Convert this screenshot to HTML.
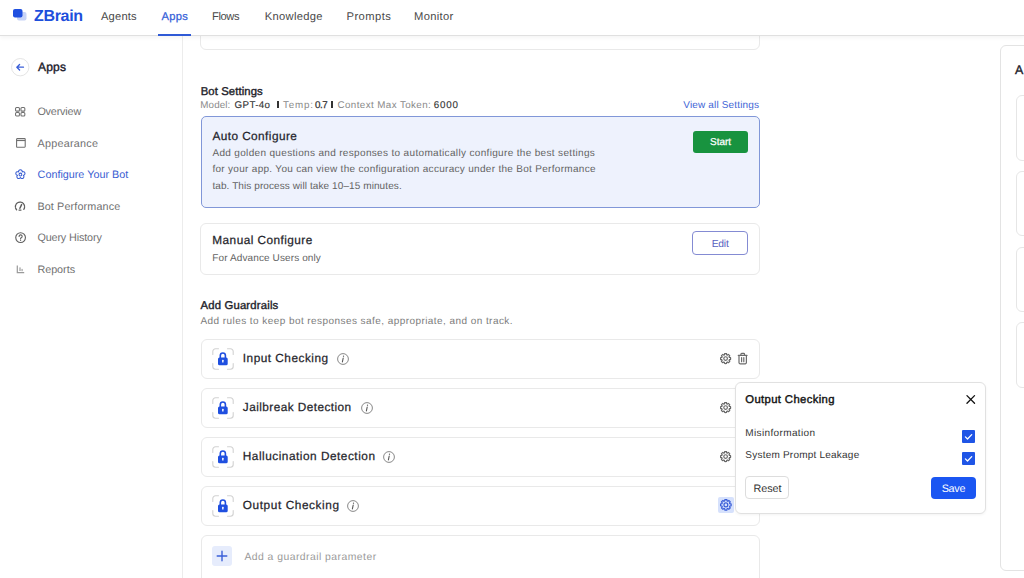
<!DOCTYPE html>
<html><head><meta charset="utf-8"><title>ZBrain</title>
<style>
html,body{margin:0;padding:0;background:#ffffff;}
body{width:1024px;height:578px;overflow:hidden;position:relative;font-family:"Liberation Sans",sans-serif;text-rendering:geometricPrecision;}
.t{position:absolute;white-space:nowrap;}
.a{position:absolute;display:block;overflow:visible;}
.box{position:absolute;box-sizing:border-box;}
.card{border:1px solid #e9e9e9;border-radius:6px;background:#fff;}
</style></head><body>
<!-- right panel -->
<div class="box" style="left:1000.4px;top:44.7px;width:60px;height:526.7px;border:1px solid #e3e3e3;border-radius:6px"></div>
<div class="box" style="left:1015.5px;top:95.4px;width:40px;height:65.3px;border:1px solid #e6e6e6;border-radius:6px"></div>
<div class="box" style="left:1015.5px;top:171.1px;width:40px;height:65.4px;border:1px solid #e6e6e6;border-radius:6px"></div>
<div class="box" style="left:1015.5px;top:247px;width:40px;height:65px;border:1px solid #e6e6e6;border-radius:6px"></div>
<div class="box" style="left:1015.5px;top:321.7px;width:40px;height:66.5px;border:1px solid #e6e6e6;border-radius:6px"></div>

<!-- pipes -->
<div class="box" style="left:277.4px;top:101.2px;width:1.7px;height:7.2px;background:#333"></div>
<div class="box" style="left:331.2px;top:101.2px;width:1.7px;height:7.2px;background:#333"></div>
<!-- sidebar border -->
<div class="box" style="left:182px;top:35px;width:1px;height:543px;background:#ececec"></div>

<!-- top card -->
<div class="box card" style="left:200.3px;top:10px;width:559.7px;height:39.6px"></div>

<!-- auto configure -->
<div class="box" style="left:200.5px;top:115.5px;width:559.8px;height:92.6px;border:1px solid #8197d8;border-radius:5px;background:#eef2fd"></div>
<div class="box" style="left:693px;top:131px;width:54.5px;height:22px;background:#18933f;border-radius:3px"></div>

<!-- manual configure -->
<div class="box card" style="left:200.2px;top:222.6px;width:559.6px;height:52.4px"></div>
<div class="box" style="left:692.3px;top:230.9px;width:56.2px;height:24px;border:1px solid #848bd3;border-radius:4px"></div>

<div class="box card" style="left:200.5px;top:338.5px;width:559.5px;height:40px"></div>
<svg class="a" style="left:212.3px;top:347.5px" width="22" height="22" viewBox="0 0 22 22" fill="none"><g stroke="#d2d2d2" stroke-width="1.1" stroke-linecap="round"><path d="M0.8 6.5V3.5a2.7 2.7 0 0 1 2.7-2.7H6.5"/><path d="M15.5 0.8H18.5a2.7 2.7 0 0 1 2.7 2.7V6.5"/><path d="M21.2 15.5V18.5a2.7 2.7 0 0 1-2.7 2.7H15.5"/><path d="M6.5 21.2H3.5a2.7 2.7 0 0 1-2.7-2.7V15.5"/></g><path d="M8.3 10V7.6a2.55 2.55 0 0 1 5.1 0V10" stroke="#1f4fe0" stroke-width="1.6" fill="none"/><rect x="6" y="9.4" width="9.7" height="7.8" rx="1.5" fill="#1f4fe0"/><rect x="10.15" y="11.7" width="1.4" height="2.9" rx="0.5" fill="#ffffff"/></svg>
<div class="box card" style="left:200.5px;top:387.5px;width:559.5px;height:40px"></div>
<svg class="a" style="left:212.3px;top:396.5px" width="22" height="22" viewBox="0 0 22 22" fill="none"><g stroke="#d2d2d2" stroke-width="1.1" stroke-linecap="round"><path d="M0.8 6.5V3.5a2.7 2.7 0 0 1 2.7-2.7H6.5"/><path d="M15.5 0.8H18.5a2.7 2.7 0 0 1 2.7 2.7V6.5"/><path d="M21.2 15.5V18.5a2.7 2.7 0 0 1-2.7 2.7H15.5"/><path d="M6.5 21.2H3.5a2.7 2.7 0 0 1-2.7-2.7V15.5"/></g><path d="M8.3 10V7.6a2.55 2.55 0 0 1 5.1 0V10" stroke="#1f4fe0" stroke-width="1.6" fill="none"/><rect x="6" y="9.4" width="9.7" height="7.8" rx="1.5" fill="#1f4fe0"/><rect x="10.15" y="11.7" width="1.4" height="2.9" rx="0.5" fill="#ffffff"/></svg>
<div class="box card" style="left:200.5px;top:436.5px;width:559.5px;height:40px"></div>
<svg class="a" style="left:212.3px;top:445.5px" width="22" height="22" viewBox="0 0 22 22" fill="none"><g stroke="#d2d2d2" stroke-width="1.1" stroke-linecap="round"><path d="M0.8 6.5V3.5a2.7 2.7 0 0 1 2.7-2.7H6.5"/><path d="M15.5 0.8H18.5a2.7 2.7 0 0 1 2.7 2.7V6.5"/><path d="M21.2 15.5V18.5a2.7 2.7 0 0 1-2.7 2.7H15.5"/><path d="M6.5 21.2H3.5a2.7 2.7 0 0 1-2.7-2.7V15.5"/></g><path d="M8.3 10V7.6a2.55 2.55 0 0 1 5.1 0V10" stroke="#1f4fe0" stroke-width="1.6" fill="none"/><rect x="6" y="9.4" width="9.7" height="7.8" rx="1.5" fill="#1f4fe0"/><rect x="10.15" y="11.7" width="1.4" height="2.9" rx="0.5" fill="#ffffff"/></svg>
<div class="box card" style="left:200.5px;top:485.5px;width:559.5px;height:40px"></div>
<svg class="a" style="left:212.3px;top:494.5px" width="22" height="22" viewBox="0 0 22 22" fill="none"><g stroke="#d2d2d2" stroke-width="1.1" stroke-linecap="round"><path d="M0.8 6.5V3.5a2.7 2.7 0 0 1 2.7-2.7H6.5"/><path d="M15.5 0.8H18.5a2.7 2.7 0 0 1 2.7 2.7V6.5"/><path d="M21.2 15.5V18.5a2.7 2.7 0 0 1-2.7 2.7H15.5"/><path d="M6.5 21.2H3.5a2.7 2.7 0 0 1-2.7-2.7V15.5"/></g><path d="M8.3 10V7.6a2.55 2.55 0 0 1 5.1 0V10" stroke="#1f4fe0" stroke-width="1.6" fill="none"/><rect x="6" y="9.4" width="9.7" height="7.8" rx="1.5" fill="#1f4fe0"/><rect x="10.15" y="11.7" width="1.4" height="2.9" rx="0.5" fill="#ffffff"/></svg>
<svg class="a" style="left:337.3px;top:352.8px" width="12" height="12" viewBox="0 0 12 12" fill="none"><circle cx="6" cy="6" r="5.4" stroke="#7a7a7a" stroke-width="0.9"/><path d="M6.5 3.1l0 0.1" stroke="#555" stroke-width="1.2" stroke-linecap="round"/><path d="M6.2 5.0L5.4 8.9" stroke="#555" stroke-width="1.1" stroke-linecap="round"/></svg>
<svg class="a" style="left:360.6px;top:401.8px" width="12" height="12" viewBox="0 0 12 12" fill="none"><circle cx="6" cy="6" r="5.4" stroke="#7a7a7a" stroke-width="0.9"/><path d="M6.5 3.1l0 0.1" stroke="#555" stroke-width="1.2" stroke-linecap="round"/><path d="M6.2 5.0L5.4 8.9" stroke="#555" stroke-width="1.1" stroke-linecap="round"/></svg>
<svg class="a" style="left:382.9px;top:450.8px" width="12" height="12" viewBox="0 0 12 12" fill="none"><circle cx="6" cy="6" r="5.4" stroke="#7a7a7a" stroke-width="0.9"/><path d="M6.5 3.1l0 0.1" stroke="#555" stroke-width="1.2" stroke-linecap="round"/><path d="M6.2 5.0L5.4 8.9" stroke="#555" stroke-width="1.1" stroke-linecap="round"/></svg>
<svg class="a" style="left:347px;top:499.8px" width="12" height="12" viewBox="0 0 12 12" fill="none"><circle cx="6" cy="6" r="5.4" stroke="#7a7a7a" stroke-width="0.9"/><path d="M6.5 3.1l0 0.1" stroke="#555" stroke-width="1.2" stroke-linecap="round"/><path d="M6.2 5.0L5.4 8.9" stroke="#555" stroke-width="1.1" stroke-linecap="round"/></svg>
<svg class="a" style="left:720.40px;top:352.80px" width="11.20" height="11.20" viewBox="0 0 24 24" fill="none" stroke="#666666" stroke-width="2.5" stroke-linejoin="round" stroke-linecap="round"><path d="M19.76 8.79A8.4 8.4 0 0 1 20.07 9.68L22.60 9.94A10.8 10.8 0 0 1 22.60 14.06L20.07 14.32A8.4 8.4 0 0 1 19.76 15.21A8.4 8.4 0 0 1 19.35 16.07L20.95 18.04A10.8 10.8 0 0 1 18.04 20.95L16.07 19.35A8.4 8.4 0 0 1 15.21 19.76A8.4 8.4 0 0 1 14.32 20.07L14.06 22.60A10.8 10.8 0 0 1 9.94 22.60L9.68 20.07A8.4 8.4 0 0 1 8.79 19.76A8.4 8.4 0 0 1 7.93 19.35L5.96 20.95A10.8 10.8 0 0 1 3.05 18.04L4.65 16.07A8.4 8.4 0 0 1 4.24 15.21A8.4 8.4 0 0 1 3.93 14.32L1.40 14.06A10.8 10.8 0 0 1 1.40 9.94L3.93 9.68A8.4 8.4 0 0 1 4.24 8.79A8.4 8.4 0 0 1 4.65 7.93L3.05 5.96A10.8 10.8 0 0 1 5.96 3.05L7.93 4.65A8.4 8.4 0 0 1 8.79 4.24A8.4 8.4 0 0 1 9.68 3.93L9.94 1.40A10.8 10.8 0 0 1 14.06 1.40L14.32 3.93A8.4 8.4 0 0 1 15.21 4.24A8.4 8.4 0 0 1 16.07 4.65L18.04 3.05A10.8 10.8 0 0 1 20.95 5.96L19.35 7.93A8.4 8.4 0 0 1 19.76 8.79Z"/><circle cx="12" cy="12" r="3.9"/></svg>
<svg class="a" style="left:720.40px;top:401.80px" width="11.20" height="11.20" viewBox="0 0 24 24" fill="none" stroke="#666666" stroke-width="2.5" stroke-linejoin="round" stroke-linecap="round"><path d="M19.76 8.79A8.4 8.4 0 0 1 20.07 9.68L22.60 9.94A10.8 10.8 0 0 1 22.60 14.06L20.07 14.32A8.4 8.4 0 0 1 19.76 15.21A8.4 8.4 0 0 1 19.35 16.07L20.95 18.04A10.8 10.8 0 0 1 18.04 20.95L16.07 19.35A8.4 8.4 0 0 1 15.21 19.76A8.4 8.4 0 0 1 14.32 20.07L14.06 22.60A10.8 10.8 0 0 1 9.94 22.60L9.68 20.07A8.4 8.4 0 0 1 8.79 19.76A8.4 8.4 0 0 1 7.93 19.35L5.96 20.95A10.8 10.8 0 0 1 3.05 18.04L4.65 16.07A8.4 8.4 0 0 1 4.24 15.21A8.4 8.4 0 0 1 3.93 14.32L1.40 14.06A10.8 10.8 0 0 1 1.40 9.94L3.93 9.68A8.4 8.4 0 0 1 4.24 8.79A8.4 8.4 0 0 1 4.65 7.93L3.05 5.96A10.8 10.8 0 0 1 5.96 3.05L7.93 4.65A8.4 8.4 0 0 1 8.79 4.24A8.4 8.4 0 0 1 9.68 3.93L9.94 1.40A10.8 10.8 0 0 1 14.06 1.40L14.32 3.93A8.4 8.4 0 0 1 15.21 4.24A8.4 8.4 0 0 1 16.07 4.65L18.04 3.05A10.8 10.8 0 0 1 20.95 5.96L19.35 7.93A8.4 8.4 0 0 1 19.76 8.79Z"/><circle cx="12" cy="12" r="3.9"/></svg>
<svg class="a" style="left:720.40px;top:450.80px" width="11.20" height="11.20" viewBox="0 0 24 24" fill="none" stroke="#666666" stroke-width="2.5" stroke-linejoin="round" stroke-linecap="round"><path d="M19.76 8.79A8.4 8.4 0 0 1 20.07 9.68L22.60 9.94A10.8 10.8 0 0 1 22.60 14.06L20.07 14.32A8.4 8.4 0 0 1 19.76 15.21A8.4 8.4 0 0 1 19.35 16.07L20.95 18.04A10.8 10.8 0 0 1 18.04 20.95L16.07 19.35A8.4 8.4 0 0 1 15.21 19.76A8.4 8.4 0 0 1 14.32 20.07L14.06 22.60A10.8 10.8 0 0 1 9.94 22.60L9.68 20.07A8.4 8.4 0 0 1 8.79 19.76A8.4 8.4 0 0 1 7.93 19.35L5.96 20.95A10.8 10.8 0 0 1 3.05 18.04L4.65 16.07A8.4 8.4 0 0 1 4.24 15.21A8.4 8.4 0 0 1 3.93 14.32L1.40 14.06A10.8 10.8 0 0 1 1.40 9.94L3.93 9.68A8.4 8.4 0 0 1 4.24 8.79A8.4 8.4 0 0 1 4.65 7.93L3.05 5.96A10.8 10.8 0 0 1 5.96 3.05L7.93 4.65A8.4 8.4 0 0 1 8.79 4.24A8.4 8.4 0 0 1 9.68 3.93L9.94 1.40A10.8 10.8 0 0 1 14.06 1.40L14.32 3.93A8.4 8.4 0 0 1 15.21 4.24A8.4 8.4 0 0 1 16.07 4.65L18.04 3.05A10.8 10.8 0 0 1 20.95 5.96L19.35 7.93A8.4 8.4 0 0 1 19.76 8.79Z"/><circle cx="12" cy="12" r="3.9"/></svg>
<div class="box" style="left:717.8px;top:497px;width:16.2px;height:16px;background:#d6e1fc;border-radius:2px"></div>
<svg class="a" style="left:720.02px;top:499.22px" width="11.76" height="11.76" viewBox="0 0 24 24" fill="none" stroke="#3b5fd8" stroke-width="2.5" stroke-linejoin="round" stroke-linecap="round"><path d="M19.76 8.79A8.4 8.4 0 0 1 20.07 9.68L22.60 9.94A10.8 10.8 0 0 1 22.60 14.06L20.07 14.32A8.4 8.4 0 0 1 19.76 15.21A8.4 8.4 0 0 1 19.35 16.07L20.95 18.04A10.8 10.8 0 0 1 18.04 20.95L16.07 19.35A8.4 8.4 0 0 1 15.21 19.76A8.4 8.4 0 0 1 14.32 20.07L14.06 22.60A10.8 10.8 0 0 1 9.94 22.60L9.68 20.07A8.4 8.4 0 0 1 8.79 19.76A8.4 8.4 0 0 1 7.93 19.35L5.96 20.95A10.8 10.8 0 0 1 3.05 18.04L4.65 16.07A8.4 8.4 0 0 1 4.24 15.21A8.4 8.4 0 0 1 3.93 14.32L1.40 14.06A10.8 10.8 0 0 1 1.40 9.94L3.93 9.68A8.4 8.4 0 0 1 4.24 8.79A8.4 8.4 0 0 1 4.65 7.93L3.05 5.96A10.8 10.8 0 0 1 5.96 3.05L7.93 4.65A8.4 8.4 0 0 1 8.79 4.24A8.4 8.4 0 0 1 9.68 3.93L9.94 1.40A10.8 10.8 0 0 1 14.06 1.40L14.32 3.93A8.4 8.4 0 0 1 15.21 4.24A8.4 8.4 0 0 1 16.07 4.65L18.04 3.05A10.8 10.8 0 0 1 20.95 5.96L19.35 7.93A8.4 8.4 0 0 1 19.76 8.79Z"/><circle cx="12" cy="12" r="3.9"/></svg>
<svg class="a" style="left:736px;top:351px" width="12" height="14" viewBox="0 0 12 14" fill="none" stroke="#6c6c6c" stroke-width="1.2" stroke-linecap="round" stroke-linejoin="round"><path d="M2.3 4.4H11"/><path d="M4.9 4.2V3.2a0.8 0.8 0 0 1 0.8-0.8H7.7a0.8 0.8 0 0 1 0.8 0.8V4.2"/><path d="M3 4.6V11.6a1.2 1.2 0 0 0 1.2 1.2H9.2a1.2 1.2 0 0 0 1.2-1.2V4.6"/><path d="M5.6 6.6V10.7M7.8 6.6V10.7"/></svg>

<!-- add param -->
<div class="box card" style="left:200.5px;top:534.6px;width:559.5px;height:60px"></div>
<div class="box" style="left:212.2px;top:546.4px;width:20.3px;height:20px;background:#e6ecfc;border-radius:3px"></div>
<svg class="a" style="left:216.3px;top:550.4px" width="12" height="12" viewBox="0 0 12 12"><path d="M6 1.2v9.6M1.2 6h9.6" stroke="#3a5fd8" stroke-width="1.4" stroke-linecap="round"/></svg>

<!-- popover -->
<div class="box" style="left:734.6px;top:382.3px;width:251.6px;height:131.5px;border:1px solid #e1e1e1;border-radius:6px;background:#fff;box-shadow:0 1px 3px rgba(0,0,0,0.05)"></div>
<svg class="a" style="left:966.3px;top:394.9px" width="9.5" height="8.8" viewBox="0 0 10 10"><path d="M0.7 0.7L9.3 9.3M9.3 0.7L0.7 9.3" stroke="#111" stroke-width="1.5" stroke-linecap="round"/></svg>
<svg class="a" style="left:962.3px;top:429.5px" width="13" height="13" viewBox="0 0 13 13"><rect width="13" height="13" rx="1" fill="#1f55e6"/><path d="M3.4 6.9l2.1 2.1 4.2-4.4" stroke="#fff" stroke-width="1.3" fill="none" stroke-linecap="round" stroke-linejoin="round"/></svg>
<svg class="a" style="left:962.3px;top:452px" width="13" height="13" viewBox="0 0 13 13"><rect width="13" height="13" rx="1" fill="#1f55e6"/><path d="M3.4 6.9l2.1 2.1 4.2-4.4" stroke="#fff" stroke-width="1.3" fill="none" stroke-linecap="round" stroke-linejoin="round"/></svg>
<div class="box" style="left:745.4px;top:476.4px;width:44px;height:22.3px;border:1px solid #dddddd;border-radius:4px"></div>
<div class="box" style="left:931px;top:476.6px;width:44.7px;height:22.1px;background:#1b56f2;border-radius:4px"></div>

<!-- header -->
<div class="box" style="left:0;top:0;width:1024px;height:36px;background:#fff;border-bottom:1px solid #e0e0e0;box-shadow:0 2px 4px rgba(0,0,0,0.045)"></div>
<div class="box" style="left:158px;top:34px;width:33px;height:2px;background:#2f5ad6"></div>
<svg class="a" style="left:13px;top:9px" width="14" height="12" viewBox="0 0 14 12">
<rect x="4" y="3" width="9.5" height="8.5" rx="2" fill="#c7d3f7"/>
<rect x="0" y="0" width="9.5" height="8.5" rx="2" fill="#1f4fe0"/>
</svg>

<!-- sidebar icons -->
<svg class="a" style="left:11px;top:57.7px" width="18.4" height="18.4" viewBox="0 0 18 18"><circle cx="9" cy="9" r="8.5" fill="#fff" stroke="#e2e2e2" stroke-width="0.9"/><path d="M12.2 9H5.8M8.4 6.3L5.7 9l2.7 2.7" stroke="#3a5fd8" stroke-width="1.3" fill="none" stroke-linecap="round" stroke-linejoin="round"/></svg>
<svg class="a" style="left:15.4px;top:106.8px" width="10.4" height="9.6" viewBox="0 0 10.4 9.6" fill="none" stroke="#707070" stroke-width="1.05">
<rect x="0.55" y="0.55" width="3.9" height="3.6" rx="1"/><rect x="5.95" y="0.55" width="3.9" height="3.6" rx="1"/><rect x="0.55" y="5.45" width="3.9" height="3.6" rx="1"/><rect x="5.95" y="5.45" width="3.9" height="3.6" rx="1"/></svg>
<svg class="a" style="left:15.7px;top:138px" width="9.8" height="9.8" viewBox="0 0 10 10" fill="none" stroke="#6f6f6f" stroke-width="1.1">
<rect x="0.6" y="0.6" width="8.8" height="8.8" rx="0.6"/><path d="M0.6 2.6H9.4"/></svg>
<svg class="a" style="left:14.6px;top:168.9px" width="10.8" height="10.8" viewBox="0 0 24 24" fill="none" stroke="#3a5ed2" stroke-width="2.3" stroke-linejoin="round"><path d="M16.00 6.50A4.1 4.1 0 1 1 18.47 14.10A4.1 4.1 0 1 1 12.00 18.80A4.1 4.1 0 1 1 5.53 14.10A4.1 4.1 0 1 1 8.00 6.50A4.1 4.1 0 1 1 16.00 6.50Z"/><circle cx="12" cy="12.3" r="3.1"/></svg>
<svg class="a" style="left:14px;top:200px" width="12" height="12" viewBox="0 0 12 12" fill="none" stroke="#5e5e5e" stroke-width="1.3" stroke-linecap="round">
<path d="M2.6 9.8A4.6 4.6 0 1 1 9.4 9.8" stroke-dasharray="2.1 0.9"/><path d="M5.9 8.2L7.6 4.6" stroke-width="1.5"/><path d="M5 10.1h2" stroke-width="1.2"/></svg>
<svg class="a" style="left:14.6px;top:231.7px" width="11.2" height="11.2" viewBox="0 0 12 12" fill="none" stroke="#606060" stroke-width="1.2" stroke-linecap="round">
<circle cx="6" cy="6" r="5.2"/><path d="M4.4 4.7a1.65 1.65 0 1 1 2.3 1.5c-0.5 0.25-0.7 0.5-0.7 1.1v0.2"/><path d="M6 8.9v0.05" stroke-width="1.4"/></svg>
<svg class="a" style="left:16px;top:264.5px" width="9" height="9" viewBox="0 0 9 9" fill="none" stroke="#9a9a9a" stroke-width="1.2">
<path d="M1.3 0.6V7.6H8.2"/><rect x="3" y="2.4" width="2" height="3.6" fill="#c4c4c4" stroke="none"/><rect x="5.4" y="3.9" width="1.4" height="2.3" fill="#b0b0b0" stroke="none"/></svg>

<div class="t" style="left:34.00px;top:8.64px;font-size:16px;line-height:16px;font-weight:700;color:#1d4fdc;letter-spacing:-0.320px;">ZBrain</div>
<div class="t" style="left:101.00px;top:12.37px;font-size:11.2px;line-height:11.2px;font-weight:400;color:#4a4a4a;letter-spacing:0.160px;">Agents</div>
<div class="t" style="left:161.60px;top:11.93px;font-size:11.2px;line-height:11.2px;font-weight:400;-webkit-text-stroke:0.25px #3560d8;color:#3560d8;letter-spacing:0.213px;">Apps</div>
<div class="t" style="left:212.00px;top:12.37px;font-size:11.2px;line-height:11.2px;font-weight:400;color:#4a4a4a;letter-spacing:-0.400px;">Flows</div>
<div class="t" style="left:264.80px;top:12.37px;font-size:11.2px;line-height:11.2px;font-weight:400;color:#4a4a4a;letter-spacing:0.300px;">Knowledge</div>
<div class="t" style="left:346.50px;top:12.37px;font-size:11.2px;line-height:11.2px;font-weight:400;color:#4a4a4a;letter-spacing:0.467px;">Prompts</div>
<div class="t" style="left:414.00px;top:12.37px;font-size:11.2px;line-height:11.2px;font-weight:400;color:#4a4a4a;letter-spacing:0.334px;">Monitor</div>
<div class="t" style="left:38.00px;top:61.13px;font-size:12px;line-height:12px;font-weight:400;-webkit-text-stroke:0.4px #1a1a2a;color:#1a1a2a;letter-spacing:0.213px;">Apps</div>
<div class="t" style="left:37.40px;top:107.39px;font-size:10.8px;line-height:10.8px;font-weight:400;color:#707070;letter-spacing:-0.172px;">Overview</div>
<div class="t" style="left:37.60px;top:138.59px;font-size:10.8px;line-height:10.8px;font-weight:400;color:#707070;letter-spacing:0.231px;">Appearance</div>
<div class="t" style="left:37.60px;top:170.09px;font-size:10.8px;line-height:10.8px;font-weight:400;color:#3a5ed2;letter-spacing:-0.004px;">Configure Your Bot</div>
<div class="t" style="left:37.40px;top:201.59px;font-size:10.8px;line-height:10.8px;font-weight:400;color:#707070;letter-spacing:0.126px;">Bot Performance</div>
<div class="t" style="left:37.40px;top:233.39px;font-size:10.8px;line-height:10.8px;font-weight:400;color:#707070;letter-spacing:-0.134px;">Query History</div>
<div class="t" style="left:37.40px;top:264.59px;font-size:10.8px;line-height:10.8px;font-weight:400;color:#707070;letter-spacing:-0.027px;">Reports</div>
<div class="t" style="left:200.70px;top:86.82px;font-size:11.3px;line-height:11.3px;font-weight:400;-webkit-text-stroke:0.4px #1f1f2b;color:#1f1f2b;letter-spacing:0.102px;">Bot Settings</div>
<div class="t" style="left:200.30px;top:101.06px;font-size:9.8px;line-height:9.8px;font-weight:400;color:#8a8a8a;letter-spacing:0.128px;">Model:</div>
<div class="t" style="left:234.60px;top:101.02px;font-size:9.8px;line-height:9.8px;font-weight:400;-webkit-text-stroke:0.12px #333333;color:#333333;letter-spacing:0.320px;">GPT-4o</div>
<div class="t" style="left:283.00px;top:101.06px;font-size:9.8px;line-height:9.8px;font-weight:400;color:#8a8a8a;letter-spacing:0.840px;">Temp:</div>
<div class="t" style="left:315.00px;top:100.56px;font-size:9.8px;line-height:9.8px;font-weight:400;-webkit-text-stroke:0.25px #333333;color:#333333;letter-spacing:-0.400px;">0.7</div>
<div class="t" style="left:337.50px;top:101.06px;font-size:9.8px;line-height:9.8px;font-weight:400;color:#8a8a8a;letter-spacing:0.404px;">Context Max Token:</div>
<div class="t" style="left:433.80px;top:101.02px;font-size:9.8px;line-height:9.8px;font-weight:400;-webkit-text-stroke:0.12px #333333;color:#333333;letter-spacing:0.826px;">6000</div>
<div class="t" style="left:683.30px;top:101.34px;font-size:10px;line-height:10px;font-weight:400;color:#4165d6;letter-spacing:0.160px;">View all Settings</div>
<div class="t" style="left:212.40px;top:131.33px;font-size:11.8px;line-height:11.8px;font-weight:400;-webkit-text-stroke:0.25px #1f1f2b;color:#1f1f2b;letter-spacing:0.443px;">Auto Configure</div>
<div class="t" style="left:212.40px;top:148.64px;font-size:10px;line-height:10px;font-weight:400;color:#636363;letter-spacing:0.335px;">Add golden questions and responses to automatically configure the best settings</div>
<div class="t" style="left:212.40px;top:165.24px;font-size:10px;line-height:10px;font-weight:400;color:#636363;letter-spacing:0.301px;">for your app. You can view the configuration accuracy under the Bot Performance</div>
<div class="t" style="left:212.40px;top:181.64px;font-size:10px;line-height:10px;font-weight:400;color:#636363;letter-spacing:0.093px;">tab. This process will take 10–15 minutes.</div>
<div class="t" style="left:710.00px;top:137.75px;font-size:10px;line-height:10px;font-weight:400;-webkit-text-stroke:0.25px #ffffff;color:#ffffff;letter-spacing:0.000px;">Start</div>
<div class="t" style="left:212.30px;top:234.93px;font-size:11.8px;line-height:11.8px;font-weight:400;-webkit-text-stroke:0.25px #1f1f2b;color:#1f1f2b;letter-spacing:0.460px;">Manual Configure</div>
<div class="t" style="left:212.30px;top:254.34px;font-size:10px;line-height:10px;font-weight:400;color:#636363;letter-spacing:0.115px;">For Advance Users only</div>
<div class="t" style="left:711.70px;top:240.44px;font-size:10.3px;line-height:10.3px;font-weight:400;color:#5860c0;letter-spacing:-0.214px;">Edit</div>
<div class="t" style="left:200.50px;top:300.52px;font-size:11.3px;line-height:11.3px;font-weight:400;-webkit-text-stroke:0.4px #1f1f2b;color:#1f1f2b;letter-spacing:0.183px;">Add Guardrails</div>
<div class="t" style="left:200.50px;top:316.64px;font-size:10px;line-height:10px;font-weight:400;color:#7c7c7c;letter-spacing:0.435px;">Add rules to keep bot responses safe, appropriate, and on track.</div>
<div class="t" style="left:242.80px;top:352.73px;font-size:11.8px;line-height:11.8px;font-weight:400;-webkit-text-stroke:0.25px #1f1f2b;color:#1f1f2b;letter-spacing:0.505px;">Input Checking</div>
<div class="t" style="left:242.80px;top:401.73px;font-size:11.8px;line-height:11.8px;font-weight:400;-webkit-text-stroke:0.25px #1f1f2b;color:#1f1f2b;letter-spacing:0.446px;">Jailbreak Detection</div>
<div class="t" style="left:242.80px;top:450.73px;font-size:11.8px;line-height:11.8px;font-weight:400;-webkit-text-stroke:0.25px #1f1f2b;color:#1f1f2b;letter-spacing:0.523px;">Hallucination Detection</div>
<div class="t" style="left:242.80px;top:499.73px;font-size:11.8px;line-height:11.8px;font-weight:400;-webkit-text-stroke:0.25px #1f1f2b;color:#1f1f2b;letter-spacing:0.594px;">Output Checking</div>
<div class="t" style="left:244.40px;top:553.41px;font-size:10.4px;line-height:10.4px;font-weight:400;color:#9a9a9a;letter-spacing:0.460px;">Add a guardrail parameter</div>
<div class="t" style="left:745.30px;top:394.62px;font-size:11.3px;line-height:11.3px;font-weight:400;-webkit-text-stroke:0.4px #111111;color:#111111;letter-spacing:0.360px;">Output Checking</div>
<div class="t" style="left:745.30px;top:428.94px;font-size:10px;line-height:10px;font-weight:400;color:#333333;letter-spacing:0.363px;">Misinformation</div>
<div class="t" style="left:745.30px;top:451.44px;font-size:10px;line-height:10px;font-weight:400;color:#333333;letter-spacing:0.220px;">System Prompt Leakage</div>
<div class="t" style="left:753.40px;top:484.39px;font-size:10.8px;line-height:10.8px;font-weight:400;color:#333333;letter-spacing:0.000px;">Reset</div>
<div class="t" style="left:941.70px;top:483.89px;font-size:10.8px;line-height:10.8px;font-weight:400;color:#ffffff;letter-spacing:-0.293px;">Save</div>
<div class="t" style="left:1015.00px;top:64.02px;font-size:12.4px;line-height:12.4px;font-weight:400;-webkit-text-stroke:0.4px #1a1a2a;color:#1a1a2a;letter-spacing:0.000px;">A</div>
</body></html>
